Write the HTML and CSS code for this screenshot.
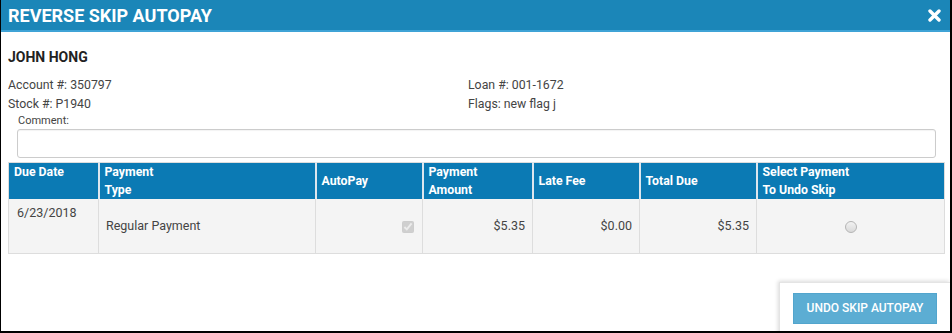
FILE: index.html
```html
<!DOCTYPE html>
<html>
<head>
<meta charset="utf-8">
<link rel="stylesheet" href="styles.css">
</head>
<body>
<div class="frame">
  <div class="titlebar">
    <h1 class="title">REVERSE SKIP AUTOPAY</h1>
    <svg class="close" width="13" height="13" viewBox="0 0 13 13"><path d="M2 2 L11 11 M11 2 L2 11" stroke="#fff" stroke-width="3.4" stroke-linecap="round"/></svg>
  </div>
  <div class="content">
    <div class="name">JOHN HONG</div>
    <div class="info">
      <div class="info-col">
        <div class="info-line">Account #: 350797</div>
        <div class="info-line">Stock #: P1940</div>
      </div>
      <div class="info-col">
        <div class="info-line">Loan #: 001-1672</div>
        <div class="info-line">Flags: new flag j</div>
      </div>
    </div>
    <div class="comment">
      <label class="comment-label">Comment:</label>
      <input class="comment-input" type="text">
    </div>
    <table class="grid">
      <colgroup>
        <col style="width:90px"><col style="width:217px"><col style="width:107px"><col style="width:110px"><col style="width:107px"><col style="width:117px"><col style="width:188px">
      </colgroup>
      <thead>
        <tr>
          <th class="top">Due Date</th>
          <th>Payment<br>Type</th>
          <th>AutoPay</th>
          <th>Payment<br>Amount</th>
          <th>Late Fee</th>
          <th>Total Due</th>
          <th>Select Payment<br>To Undo Skip</th>
        </tr>
      </thead>
      <tbody>
        <tr>
          <td class="top">6/23/2018</td>
          <td>Regular Payment</td>
          <td class="right"><input class="chk" type="checkbox" checked disabled></td>
          <td class="right">$5.35</td>
          <td class="right">$0.00</td>
          <td class="right">$5.35</td>
          <td class="center"><input class="rad" type="radio" name="sel"></td>
        </tr>
      </tbody>
    </table>
    <div class="footer">
      <div class="panel">
        <button class="btn" type="button">UNDO SKIP AUTOPAY</button>
      </div>
    </div>
  </div>
</div>
</body>
</html>
```
FILE: styles.css
```css
html, body {
  margin: 0;
  padding: 0;
  background: #fff;
}
body {
  font-family: Roboto, "Liberation Sans", Arial, sans-serif;
  color: #333;
  width: 952px;
  height: 333px;
  overflow: hidden;
}
.frame {
  box-sizing: border-box;
  width: 952px;
  height: 333px;
  border-left: 1px solid #000;
  border-right: 2px solid #000;
  border-bottom: 2px solid #000;
  overflow: hidden;
  display: flex;
  flex-direction: column;
}
.titlebar {
  height: 30px;
  background: #1b86b8;
  border-bottom: 2px solid #3fa3d6;
  display: flex;
  align-items: center;
  justify-content: space-between;
  padding: 0 9px 0 7px;
  flex: none;
}
.title {
  margin: 0;
  color: #fff;
  font-size: 18px;
  font-weight: 700;
  letter-spacing: 0;
}
.close {
  display: block;
  margin-top: 1px;
}
.content {
  padding: 0 6px 0 7px;
  flex: 1;
  display: flex;
  flex-direction: column;
}
.name {
  margin-top: 17px;
  font-size: 14px;
  font-weight: 700;
  color: #222;
  line-height: 16px;
}
.info {
  display: flex;
  margin-top: 11px;
}
.info-col {
  width: 460px;
}
.info-line {
  font-size: 12.3px;
  line-height: 19px;
  color: #444;
}
.comment {
  padding-left: 9px;
  padding-right: 8px;
  display: flex;
  flex-direction: column;
}
.comment-label {
  font-size: 11px;
  line-height: 14px;
  color: #444;
  padding-left: 1px;
}
.comment-input {
  box-sizing: border-box;
  height: 29px;
  margin: 1px 0 0;
  border: 1px solid #ccc;
  border-radius: 3px;
  box-shadow: inset 0 1px 1px rgba(0,0,0,0.05);
  font-family: inherit;
}
.grid {
  margin-top: 4px;
  width: 936px;
  border-collapse: collapse;
  table-layout: fixed;
  border: 1px solid #ddd;
}
.grid th {
  background: #0b7ab4;
  color: #fff;
  font-size: 12.3px;
  font-weight: 700;
  text-align: left;
  line-height: 18px;
  height: 36px;
  padding: 0 5px;
  border-left: 2px solid #dde6ee;
  vertical-align: middle;
  box-sizing: border-box;
}
.grid th:first-child { border-left: none; }
.grid th.top { vertical-align: top; }
.grid td {
  background: #f4f4f4;
  font-size: 12.5px;
  color: #444;
  height: 54px;
  padding: 0 7px;
  border-left: 1px solid #ddd;
  border-bottom: 1px solid #ddd;
  vertical-align: middle;
  box-sizing: border-box;
}
.grid td:first-child { border-left: none; }
.grid td.top { vertical-align: top; padding-top: 6px; padding-left: 8px; }
.grid td.right { text-align: right; }
.grid td.center { text-align: center; }
.chk {
  margin: 0 1px 0 0;
  width: 12px;
  height: 12px;
  vertical-align: middle;
}
.rad {
  -webkit-appearance: none;
  appearance: none;
  margin: 0;
  width: 12px;
  height: 12px;
  border-radius: 50%;
  border: 1px solid #b5b5b5;
  background: linear-gradient(#f2f2f2, #d9d9d9);
  vertical-align: middle;
}
.footer {
  display: flex;
  justify-content: flex-end;
  margin-top: 28px;
  margin-right: -6px;
}
.panel {
  height: 60px;
  background: #fff;
  border-top: 1px solid #e4e4e4;
  border-left: 1px solid #e4e4e4;
  box-shadow: -1px -1px 4px rgba(0,0,0,0.15);
  padding: 10px 0 0 13px;
  box-sizing: border-box;
  width: 171px;
}
.btn {
  width: 144px;
  height: 31px;
  background: #5cadd3;
  border: 1px solid #52a5cd;
  color: #fff;
  font-family: inherit;
  font-size: 12px;
  font-weight: 500;
  padding: 0;
}
```
